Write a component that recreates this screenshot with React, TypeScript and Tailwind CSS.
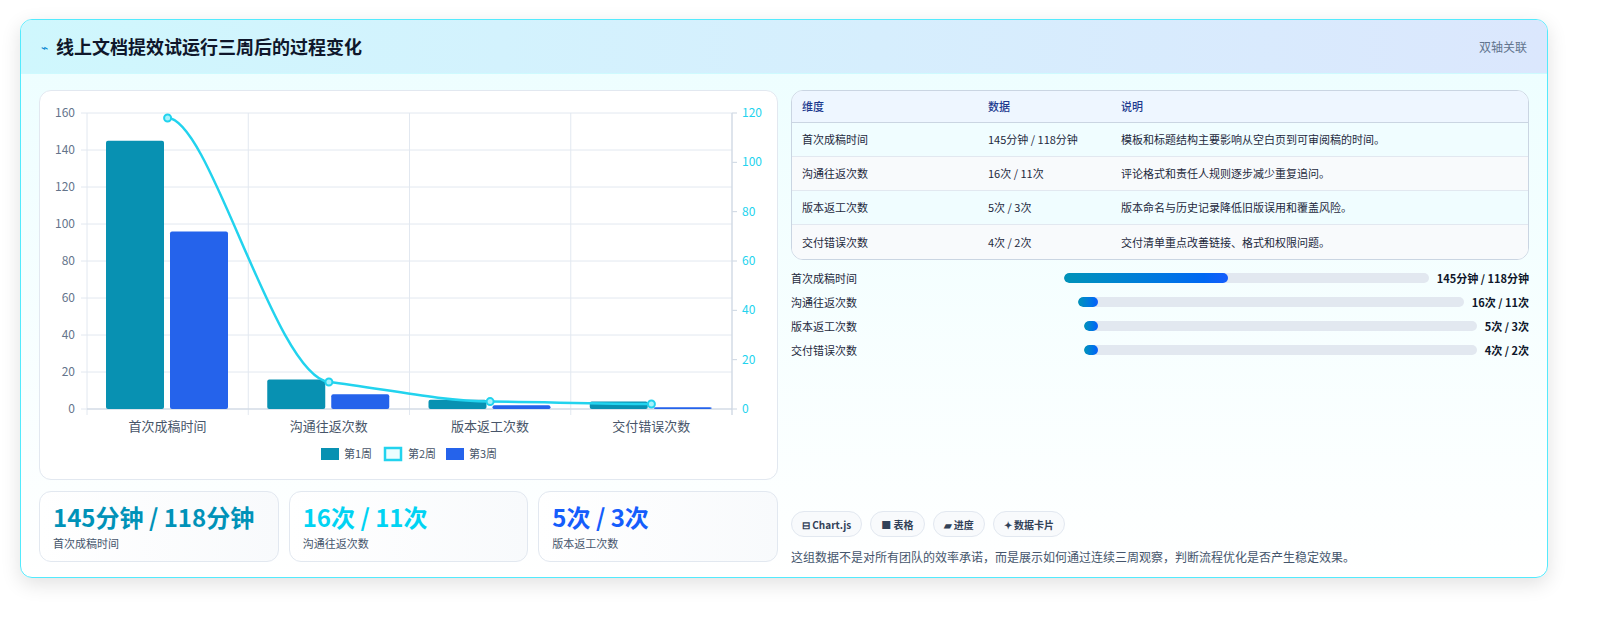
import React from 'react'

const font = { fontFamily: '"Noto Sans CJK SC", "Noto Sans", sans-serif' }

const rows = [
  { name: '首次成稿时间', data: '145分钟 / 118分钟', note: '模板和标题结构主要影响从空白页到可审阅稿的时间。', pct: 45 },
  { name: '沟通往返次数', data: '16次 / 11次', note: '评论格式和责任人规则逐步减少重复追问。', pct: 5 },
  { name: '版本返工次数', data: '5次 / 3次', note: '版本命名与历史记录降低旧版误用和覆盖风险。', pct: 3.5 },
  { name: '交付错误次数', data: '4次 / 2次', note: '交付清单重点改善链接、格式和权限问题。', pct: 3.5 },
]

const w1 = [145, 16, 5, 4]
const w3 = [96, 8, 2, 1]

function Chart() {
  const x0 = 47
  const y0 = 318
  const cw = 161.25
  const k = 296 / 160
  return (
    <svg width="739" height="390" className="block" style={font}>
      {[0, 1, 2, 3, 4, 5, 6, 7, 8].map((i) => (
        <g key={i}>
          <line x1={x0 - 6} x2={x0 + 645} y1={y0 - i * 37} y2={y0 - i * 37} stroke="#e2e8f0" />
          <text x={x0 - 12} y={y0 - i * 37 + 4} fontSize="12" fill="#64748b" textAnchor="end">{i * 20}</text>
        </g>
      ))}
      {[0, 1, 2, 3, 4, 5, 6].map((i) => (
        <g key={i}>
          <line x1={x0 + 645} x2={x0 + 650} y1={y0 - (i * 296) / 6} y2={y0 - (i * 296) / 6} stroke="#cbd5e1" />
          <text x={x0 + 655} y={y0 - (i * 296) / 6 + 4} fontSize="12" fill="#22d3ee">{i * 20}</text>
        </g>
      ))}
      {[0, 1, 2, 3, 4].map((i) => (
        <line key={i} x1={x0 + i * cw} x2={x0 + i * cw} y1={22} y2={y0 + 6} stroke="#e2e8f0" />
      ))}
      <line x1={x0 + 645} x2={x0 + 645} y1={22} y2={y0 + 6} stroke="#cbd5e1" />
      <line x1={x0} x2={x0 + 645} y1={y0} y2={y0} stroke="#cbd5e1" />
      {w1.map((v, i) => (
        <g key={i}>
          <rect x={x0 + i * cw + 19} y={y0 - v * k} width="58" height={v * k} rx="2" fill="#0891b2" />
          <rect x={x0 + i * cw + 83} y={y0 - w3[i] * k} width="58" height={w3[i] * k} rx="2" fill="#2563eb" />
        </g>
      ))}
      <path
        d="M127.6,27 C170,27 235,285 288.9,291 C340,297 400,310 450.1,310.6 C500,311 560,313 611.4,313"
        fill="none"
        stroke="#22d3ee"
        strokeWidth="2.5"
      />
      {[[127.6, 27], [288.9, 291], [450.1, 310.6], [611.4, 313]].map(([cx, cy], i) => (
        <circle key={i} cx={cx} cy={cy} r="3.5" fill="#a5f3fc" stroke="#22d3ee" strokeWidth="2" />
      ))}
      {rows.map((r, i) => (
        <text key={i} x={x0 + i * cw + cw / 2} y={340} fontSize="13" fill="#475569" textAnchor="middle">{r.name}</text>
      ))}
      <rect x="281" y="357" width="18" height="12" fill="#0891b2" />
      <text x="304" y="367" fontSize="11" fill="#475569">第1周</text>
      <rect x="345" y="357" width="16" height="12" fill="#ecfeff" stroke="#22d3ee" strokeWidth="2.5" />
      <text x="368" y="367" fontSize="11" fill="#475569">第2周</text>
      <rect x="406" y="357" width="18" height="12" fill="#2563eb" />
      <text x="429" y="367" fontSize="11" fill="#475569">第3周</text>
    </svg>
  )
}

export default function App() {
  return (
    <div className="w-[1624px] h-[620px] bg-white pt-[19px] pl-[20px]" style={font}>
      <div className="w-[1528px] h-[559px] rounded-xl border border-cyan-300 bg-gradient-to-b from-[#ecfeff] to-white shadow-[0_6px_20px_rgba(0,0,0,0.12)] overflow-hidden flex flex-col">
        <div className="h-[54px] flex items-center justify-between px-5 bg-gradient-to-r from-[#cff7fd] to-[#dbe7fd] border-b border-cyan-100">
          <div className="flex items-center gap-2">
            <span className="text-[12px] text-sky-600">⌁</span>
            <span className="text-[18px] font-bold text-slate-900">线上文档提效试运行三周后的过程变化</span>
          </div>
          <span className="text-[12px] text-slate-500">双轴关联</span>
        </div>
        <div className="flex gap-[13px] px-[18px] pt-[16px]">
          <div className="w-[739px] flex flex-col gap-[11px]">
            <div className="h-[390px] rounded-xl border border-slate-200 bg-white">
              <Chart />
            </div>
            <div className="grid grid-cols-3 gap-[10px]">
              {[
                ['145分钟 / 118分钟', '首次成稿时间', 'text-cyan-600'],
                ['16次 / 11次', '沟通往返次数', 'text-cyan-400'],
                ['5次 / 3次', '版本返工次数', 'text-blue-600'],
              ].map(([v, l, c]) => (
                <div key={l} className="h-[71px] rounded-xl border border-slate-200 bg-gradient-to-r from-white to-[#f8fafc] px-[13px] pt-[10px]">
                  <div className={`text-[24px] leading-[30px] font-bold ${c}`}>{v}</div>
                  <div className="text-[11px] text-slate-600 mt-[3px]">{l}</div>
                </div>
              ))}
            </div>
          </div>
          <div className="w-[740px] flex flex-col">
            <div className="rounded-xl border border-slate-300 overflow-hidden bg-white text-[11px]">
              <div className="grid grid-cols-[186px_133px_1fr] h-[32px] items-center px-[10px] bg-[#eef6ff] border-b border-slate-300 text-blue-900 font-medium">
                <span>维度</span><span>数据</span><span>说明</span>
              </div>
              {rows.map((r, i) => (
                <div key={r.name} className={`grid grid-cols-[186px_133px_1fr] h-[34px] items-center px-[10px] text-slate-800 ${i < 3 ? 'border-b border-slate-200' : ''} ${i % 2 === 0 ? 'bg-[#f0fdff]' : 'bg-[#f8fafc]'}`}>
                  <span>{r.name}</span><span>{r.data}</span><span>{r.note}</span>
                </div>
              ))}
            </div>
            <div className="flex flex-col gap-[8px] mt-[10px] text-[11px] text-slate-800">
              {rows.map((r) => (
                <div key={r.name} className="grid grid-cols-[1fr_1.38fr_auto] gap-[8px] items-center h-[16px]">
                  <span>{r.name}</span>
                  <div className="h-[10px] rounded-full bg-slate-200 overflow-hidden">
                    <div className="h-full rounded-full bg-gradient-to-r from-cyan-600 to-blue-600" style={{ width: `${r.pct}%` }} />
                  </div>
                  <span className="font-bold text-slate-900">{r.data}</span>
                </div>
              ))}
            </div>
            <div className="flex gap-[8px] mt-[153px]">
              {['⊟ Chart.js', '■ 表格', '▰ 进度', '✦ 数据卡片'].map((t) => (
                <span key={t} className="h-[26px] px-[10px] flex items-center rounded-full border border-slate-200 bg-slate-50 text-[10px] font-bold text-slate-700">{t}</span>
              ))}
            </div>
            <p className="mt-[11px] text-[12px] text-slate-600">这组数据不是对所有团队的效率承诺，而是展示如何通过连续三周观察，判断流程优化是否产生稳定效果。</p>
          </div>
        </div>
      </div>
    </div>
  )
}
